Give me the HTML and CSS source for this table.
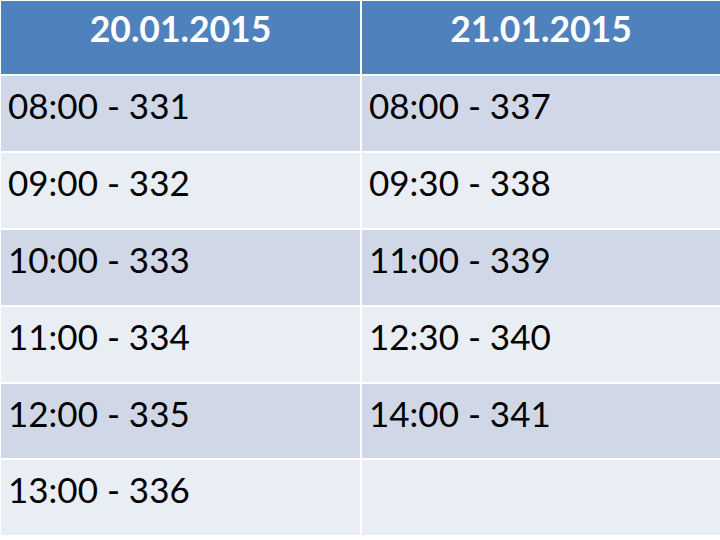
FILE: index.html
```html
<!DOCTYPE html>
<html>
<head>
<meta charset="utf-8">
<link rel="stylesheet" href="styles.css">
</head>
<body>
<div class="sheet">
  <div class="schedule">
    <div class="cell head">20.01.2015</div>
    <div class="cell head">21.01.2015</div>
    <div class="cell odd">08:00 - 331</div>
    <div class="cell odd">08:00 - 337</div>
    <div class="cell even">09:00 - 332</div>
    <div class="cell even">09:30 - 338</div>
    <div class="cell odd">10:00 - 333</div>
    <div class="cell odd">11:00 - 339</div>
    <div class="cell even">11:00 - 334</div>
    <div class="cell even">12:30 - 340</div>
    <div class="cell odd">12:00 - 335</div>
    <div class="cell odd">14:00 - 341</div>
    <div class="cell even">13:00 - 336</div>
    <div class="cell even"></div>
  </div>
</div>
</body>
</html>
```
FILE: styles.css
```css
html, body {
  margin: 0;
  padding: 0;
  background: #ffffff;
}
.sheet {
  width: 720px;
  height: 540px;
  padding: 1px 0 0 1px;
  box-sizing: border-box;
  overflow: hidden;
}
.schedule {
  display: grid;
  grid-template-columns: 359px 1fr;
  grid-template-rows: 73px repeat(6, 74.9px);
  gap: 2px;
  background: #ffffff;
  font-family: Lato, "Open Sans", "Liberation Sans", sans-serif;
}
.cell {
  box-sizing: border-box;
  line-height: 1;
  white-space: nowrap;
}
.head {
  background: #4f81bd;
  color: #ffffff;
  font-weight: 700;
  font-size: 35.5px;
  text-align: center;
  padding-top: 10px;
}
.odd, .even {
  color: #000000;
  font-size: 35px;
  padding: 12px 0 0 7px;
}
.odd {
  background: #d0d8e8;
}
.even {
  background: #e9edf4;
}
```
